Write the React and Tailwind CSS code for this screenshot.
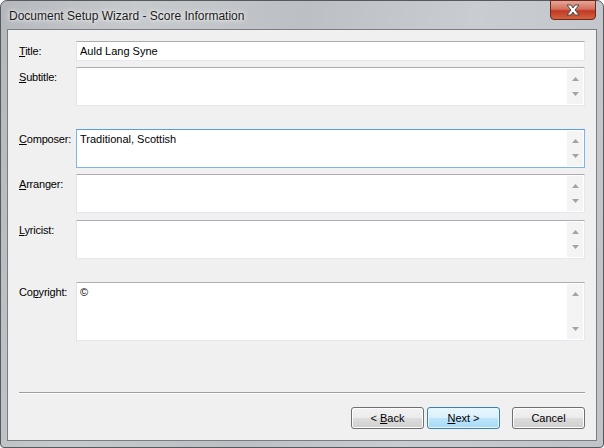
import React from 'react';

const font = { fontFamily: '"Liberation Sans", Arial, sans-serif' };

const ScrollArrows = () => (
  <div className="absolute right-[1px] top-[1px] bottom-[1px] w-[16px] bg-[#f4f4f4] flex flex-col items-center justify-between py-[8px]">
    <svg width="7" height="4" viewBox="0 0 7 4">
      <path d="M0 4 L3.5 0 L7 4 Z" fill="#a3a3a3" />
    </svg>
    <svg width="7" height="4" viewBox="0 0 7 4">
      <path d="M0 0 L7 0 L3.5 4 Z" fill="#a3a3a3" />
    </svg>
  </div>
);

const Field = ({ label, accessKey, rest, prefix = '', value, height, multi, focused, className }) => (
  <div className={`flex ${className}`}>
    <div className="w-[57px] shrink-0 pt-[4px] text-[11px] tracking-[-0.2px] text-black leading-[13px]">
      {prefix}
      <span className="underline underline-offset-1">{accessKey}</span>
      {rest}
    </div>
    <div
      className={`relative flex-1 bg-white border ${
        focused
          ? 'border-[#7eb4ea] border-t-[#569de5]'
          : 'border-[#e3e9ef] border-t-[#abadb3] border-l-[#e2e3ea]'
      }`}
      style={{ height }}
    >
      <div className="pl-[3px] pt-[3px] text-[11px] leading-[13px] text-black">{value}</div>
      {multi && <ScrollArrows />}
    </div>
  </div>
);

const WinButton = ({ children, primary, className }) => (
  <button
    className={`w-[73px] h-[22px] rounded-[3px] border text-[11px] text-black ${
      primary
        ? 'border-[#3c7fb1] bg-[linear-gradient(#eaf6fd_0%,#d9f0fc_50%,#bee6fd_50%,#a7d9f5_100%)] shadow-[inset_0_0_0_1px_#e6f6fd]'
        : 'border-[#707070] bg-[linear-gradient(#f2f2f2_0%,#ebebeb_50%,#dddddd_50%,#cfcfcf_100%)] shadow-[inset_0_0_0_1px_#fcfcfc]'
    } ${className || ''}`}
  >
    {children}
  </button>
);

export default function App() {
  return (
    <div className="w-[604px] h-[448px] overflow-hidden bg-white" style={font}>
      <div className="relative w-[604px] h-[448px] rounded-t-[7px] rounded-b-[4px] border border-[#555a60] bg-[linear-gradient(100deg,#b4b8bc_0%,#c7cacd_20%,#bcc0c4_45%,#c9ccd0_70%,#c0c3c7_100%)] flex flex-col">
        {/* Title bar */}
        <div className="h-[28px] shrink-0 flex items-start justify-between">
          <div className="pl-[8px] pt-[6px] text-[12px] text-[#1a1a1a] [text-shadow:0_0_6px_#f4f4f4,0_0_3px_#ffffff]">
            Document Setup Wizard - Score Information
          </div>
          <div className="mr-[7px] mt-[-1px] w-[46px] h-[20px] rounded-b-[4px] border border-[#6b2a21] bg-[linear-gradient(#e7a596_0%,#d3705d_45%,#c03a25_55%,#d4623d_100%)] flex items-center justify-center">
            <svg width="16" height="12" viewBox="0 0 16 12">
              <path
                d="M2 1 L6 1 L8 4 L10 1 L14 1 L10 6 L14 11 L10 11 L8 8 L6 11 L2 11 L6 6 Z"
                fill="#ffffff"
                stroke="#4a4a4a"
                strokeWidth="1"
                strokeLinejoin="round"
              />
            </svg>
          </div>
        </div>

        {/* Client area */}
        <div className="mx-[6px] mb-[6px] flex-1 border border-[#7a7e83] bg-[#f0f0f0] flex flex-col px-[11px]">
          <Field className="mt-[11px]" accessKey="T" rest="itle:" value="Auld Lang Syne" height={20} />
          <Field className="mt-[6px]" accessKey="S" rest="ubtitle:" height={39} multi />
          <Field
            className="mt-[23px]"
            accessKey="C"
            rest="omposer:"
            value="Traditional, Scottish"
            height={39}
            multi
            focused
          />
          <Field className="mt-[6px]" accessKey="A" rest="rranger:" height={39} multi />
          <Field className="mt-[7px]" accessKey="L" rest="yricist:" height={39} multi />
          <Field className="mt-[23px]" prefix="Co" accessKey="p" rest="yright:" value="©" height={59} multi />

          <div className="mt-[51px] border-t border-[#a0a0a0] border-b border-b-white" />

          <div className="mt-[13px] flex justify-end">
            <WinButton>
              &lt; <span className="underline underline-offset-1">B</span>ack
            </WinButton>
            <WinButton primary className="ml-[3px]">
              <span className="underline underline-offset-1">N</span>ext &gt;
            </WinButton>
            <WinButton className="ml-[12px]">Cancel</WinButton>
          </div>
        </div>
      </div>
    </div>
  );
}
